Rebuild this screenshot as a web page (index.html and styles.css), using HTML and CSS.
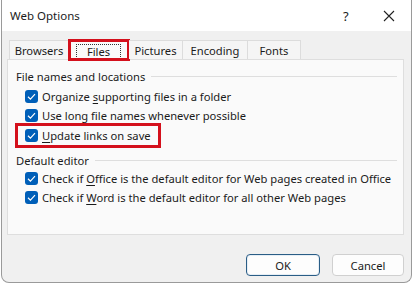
FILE: index.html
```html
<!DOCTYPE html>
<html lang="en">
<head>
  <meta charset="UTF-8">
  <title>Web Options</title>
  <link rel="stylesheet" href="styles.css">
</head>
<body>
  <div class="window">
    <div class="title-bar">
      <span class="title">Web Options</span>
      <span class="help">?</span>
      <span class="close">
        <svg width="12" height="12" viewBox="0 0 12 12"><path d="M1 1 L11 11 M11 1 L1 11" stroke="#222" stroke-width="1.1" fill="none"/></svg>
      </span>
    </div>
    <div class="content">
      <div class="tabs">
        <div class="tab tab-browsers">Browsers</div>
        <div class="tab tab-files active"><span class="focus">Files</span></div>
        <div class="tab tab-pictures">Pictures</div>
        <div class="tab tab-encoding">Encoding</div>
        <div class="tab tab-fonts">Fonts</div>
      </div>
      <div class="panel">
        <div class="group-label"><span>File names and locations</span></div>
        <div class="check-row first"><span class="box"></span><span>Organize <u>s</u>upporting files in a folder</span></div>
        <div class="check-row"><span class="box"></span><span>Use long file names whenever possible</span></div>
        <div class="check-row highlight"><span class="box"></span><span><u>U</u>pdate links on save</span></div>
        <div class="group-label second"><span>Default editor</span></div>
        <div class="check-row"><span class="box"></span><span>Check if <u>O</u>ffice is the default editor for Web pages created in Office</span></div>
        <div class="check-row"><span class="box"></span><span>Check if <u>W</u>ord is the default editor for all other Web pages</span></div>
      </div>
      <div class="buttons">
        <button class="btn default">OK</button>
        <button class="btn">Cancel</button>
      </div>
    </div>
  </div>
</body>
</html>
```

FILE: styles.css
```css
* { margin: 0; padding: 0; box-sizing: border-box; }
body {
  font-family: 'Noto Sans', 'Open Sans', Arial, sans-serif;
  font-size: 11.2px;
  color: #1b1b1b;
  background: #fff;
  width: 413px;
  height: 283px;
  overflow: hidden;
}
.window {
  width: 411px;
  height: 283px;
  margin-left: 1px;
  border: 1px solid #9a9a9a;
  border-top: none;
  border-radius: 0 0 8px 8px;
  background: #f0f0f0;
  display: flex;
  flex-direction: column;
  overflow: hidden;
}
.title-bar {
  height: 31px;
  background: #fff;
  display: flex;
  align-items: center;
  padding-left: 8px;
  font-size: 11.5px;
}
.title { flex: 1; }
.help { width: 20px; margin-right: 20px; font-size: 13px; }
.close { width: 22px; margin-right: 6px; display: flex; align-items: center; }

.content {
  flex: 1;
  display: flex;
  flex-direction: column;
  padding: 9px 6px 0 5px;
}
.tabs {
  display: flex;
  height: 19px;
  padding-left: 2px;
  position: relative;
  z-index: 1;
}
.tab {
  height: 19px;
  border: 1px solid #dcdcdc;
  border-bottom: none;
  border-left: none;
  background: #f5f5f5;
  display: flex;
  align-items: center;
  justify-content: center;
  padding-top: 1px;
}
.tab-browsers { width: 60px; border-left: 1px solid #dcdcdc; }
.tab-files { width: 60px; }
.tab-pictures { width: 54px; }
.tab-encoding { width: 65px; }
.tab-fonts { width: 53px; }
.tab.active {
  background: #fafafa;
  height: 20px;
  outline: 3px solid #d4101c;
  outline-offset: -2px;
}
.focus {
  border: 1px dotted #333;
  padding: 0 10px;
  line-height: 13px;
}

.panel {
  width: 397px;
  height: 176px;
  margin-right: 1px;
  border: 1px solid #dedede;
  background: #fafafa;
  padding: 7px 0 0 8px;
}
.group-label {
  height: 18px;
  display: flex;
  align-items: center;
  gap: 6px;
  padding-right: 6px;
}
.group-label::after {
  content: "";
  flex: 1;
  height: 1px;
  background: #dedede;
}
.group-label.second { margin-top: 6px; }
.check-row {
  height: 19px;
  display: flex;
  align-items: center;
  gap: 4px;
  padding-left: 9px;
  width: max-content;
  padding-right: 10px;
}
.check-row.first { margin-top: 2px; }
.check-row.highlight {
  height: 25px;
  margin: -2px 0 -3px -1px;
  padding-left: 10px;
  outline: 3px solid #d4101c;
  outline-offset: -3px;
}
.box {
  width: 13px;
  height: 13px;
  border-radius: 3px;
  background: #005fb8 url("data:image/svg+xml;utf8,<svg xmlns='http://www.w3.org/2000/svg' width='13' height='13'><path d='M3 6.8 L5.4 9.1 L10 4.2' stroke='white' stroke-width='1.2' fill='none'/></svg>") no-repeat center;
  flex-shrink: 0;
}
u { text-underline-offset: 2px; }

.buttons {
  display: flex;
  justify-content: flex-end;
  gap: 12px;
  margin-top: 19px;
  padding-right: 1px;
}
.btn {
  height: 22px;
  width: 72px;
  font-family: inherit;
  font-size: 11.2px;
  color: #1b1b1b;
  background: #fdfdfd;
  border: 1px solid #d0d0d0;
  border-radius: 4px;
}
.btn.default {
  width: 74px;
  border: 1px solid #2a5d86;
  box-shadow: inset 0 0 0 1px #e6eef5;
}
```
